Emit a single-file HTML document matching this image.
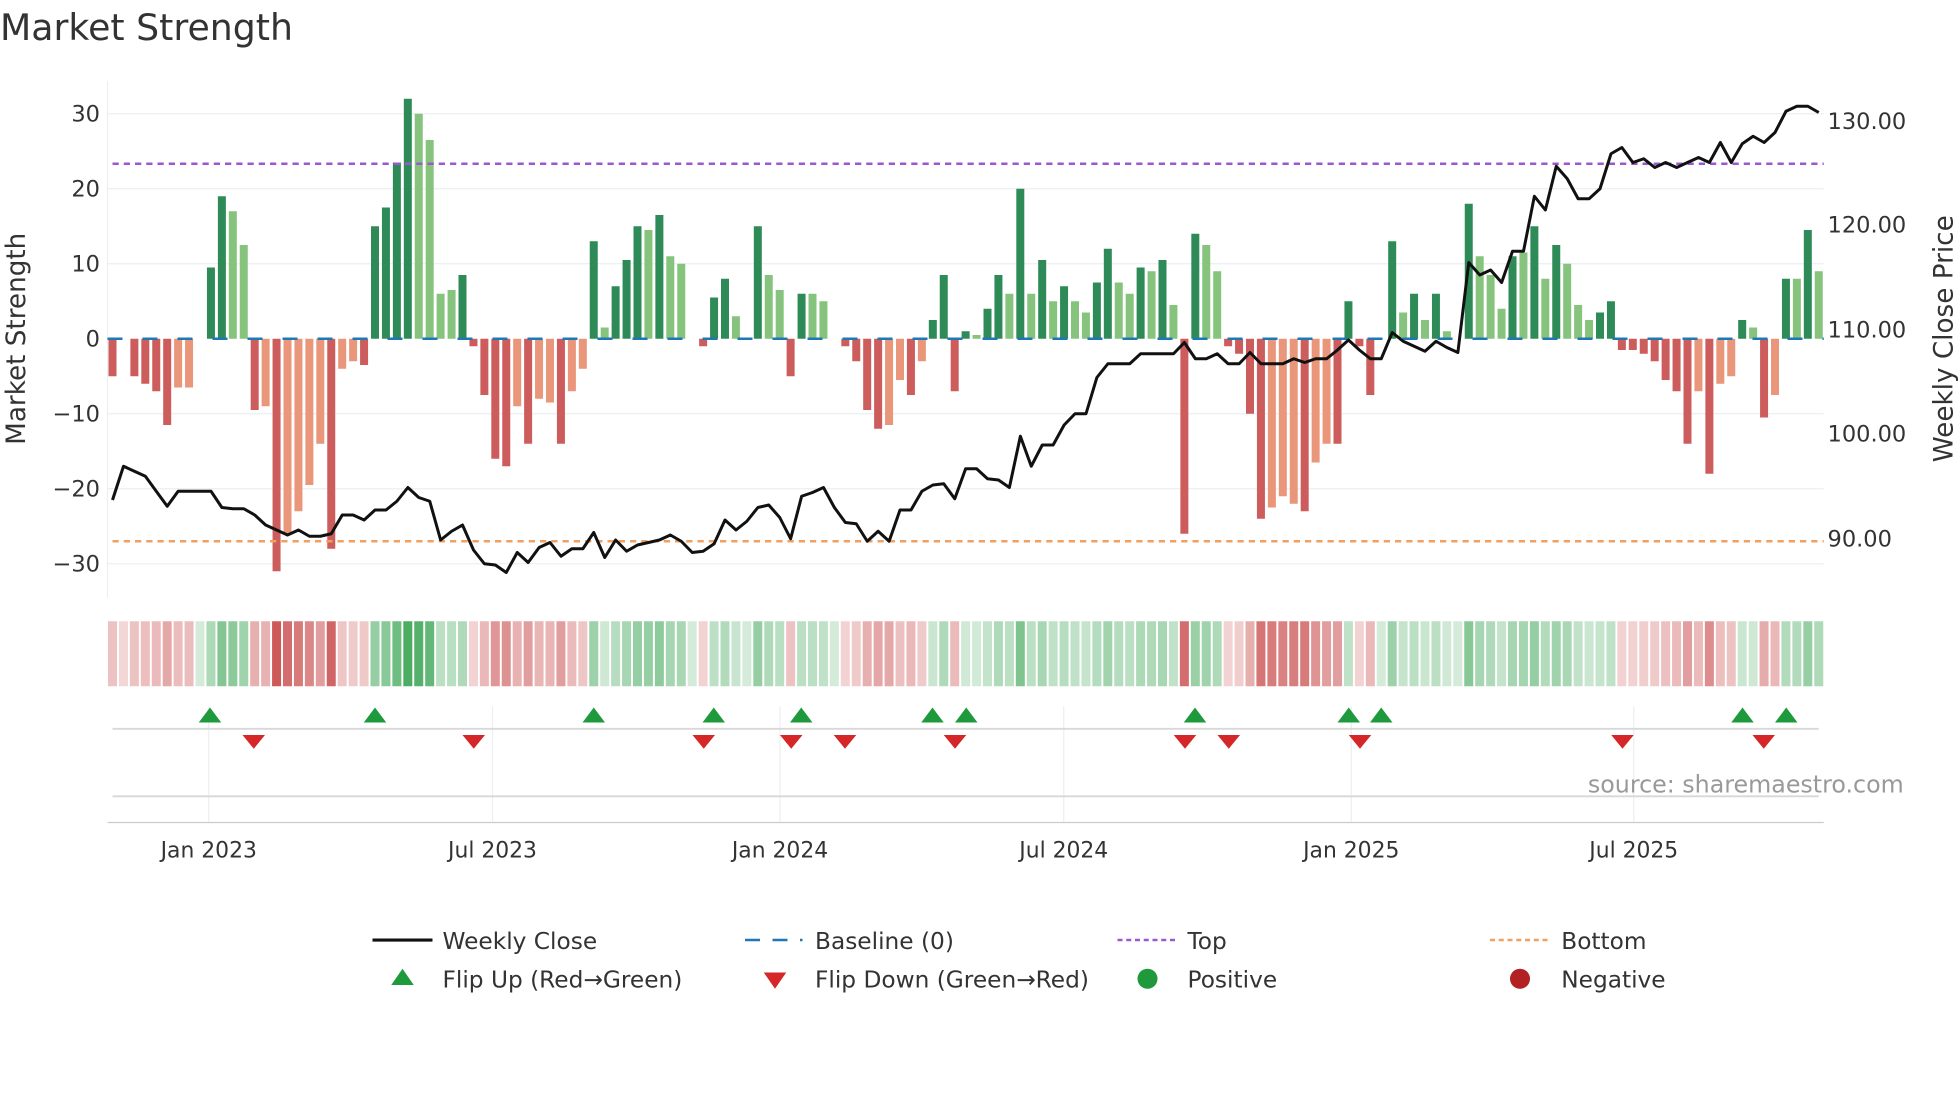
<!DOCTYPE html>
<html><head><meta charset="utf-8">
<style>
html,body{margin:0;padding:0;background:#fff;width:1960px;height:1102px;overflow:hidden}
svg{display:block;font-family:"DejaVu Sans","Liberation Sans",sans-serif}
</style></head><body>
<svg id="s" width="1960" height="1102" viewBox="0 0 1568 881.6" xmlns="http://www.w3.org/2000/svg">
<text x="0" y="32" font-size="29" fill="#333">Market Strength</text>
<g id="grid" stroke="#eceff3" stroke-width="1">
<line x1="86" x2="1459" y1="91" y2="91"/><line x1="86" x2="1459" y1="151" y2="151"/>
<line x1="86" x2="1459" y1="211" y2="211"/><line x1="86" x2="1459" y1="331" y2="331"/>
<line x1="86" x2="1459" y1="391" y2="391"/><line x1="86" x2="1459" y1="451" y2="451"/>
<line x1="86" x2="86" y1="65" y2="478"/>
<line x1="167" x2="167" y1="565" y2="658"/><line x1="394" x2="394" y1="565" y2="658"/>
<line x1="624" x2="624" y1="565" y2="658"/><line x1="851" x2="851" y1="565" y2="658"/>
<line x1="1081" x2="1081" y1="565" y2="658"/><line x1="1307" x2="1307" y1="565" y2="658"/>
</g>
<line x1="90" x2="1455" y1="583" y2="583" stroke="#d8d8d8" stroke-width="1.5"/>
<line x1="90" x2="1455" y1="637" y2="637" stroke="#d8d8d8" stroke-width="1.5"/>
<line x1="86" x2="1459" y1="658" y2="658" stroke="#ccc" stroke-width="1"/>
<g id="bars"></g>
<line x1="86" x2="1459" y1="271" y2="271" stroke="#1f77b4" stroke-width="2" stroke-dasharray="12,16"/>
<line x1="90" x2="1459" y1="131" y2="131" stroke="#9b59d0" stroke-width="2" stroke-dasharray="5,4"/>
<line x1="90" x2="1459" y1="433" y2="433" stroke="#f0a060" stroke-width="2" stroke-dasharray="5,4"/>
<polyline id="price" fill="none" stroke="#111" stroke-width="2.4" stroke-linejoin="round"/>
<g id="heat"></g>
<g id="tri"></g>
<g font-size="18" fill="#333" text-anchor="end">
<text x="80" y="97">30</text><text x="80" y="157">20</text><text x="80" y="217">10</text>
<text x="80" y="277">0</text><text x="80" y="337">−10</text><text x="80" y="397">−20</text><text x="80" y="457">−30</text>
</g>
<g font-size="18" fill="#333">
<text x="1462" y="103">130.00</text><text x="1462" y="186">120.00</text><text x="1462" y="270">110.00</text>
<text x="1462" y="353">100.00</text><text x="1462" y="437">90.00</text>
</g>
<g font-size="17.5" fill="#333" text-anchor="middle">
<text x="167" y="686">Jan 2023</text><text x="394" y="686">Jul 2023</text><text x="624" y="686">Jan 2024</text>
<text x="851" y="686">Jul 2024</text><text x="1081" y="686">Jan 2025</text><text x="1307" y="686">Jul 2025</text>
</g>
<text transform="translate(20,271) rotate(-90)" font-size="21" fill="#333" text-anchor="middle">Market Strength</text>
<text transform="translate(1562,271) rotate(-90)" font-size="21" fill="#333" text-anchor="middle">Weekly Close Price</text>
<text x="1523" y="634" font-size="19" fill="#999" text-anchor="end">source: sharemaestro.com</text>
<g font-size="18.6" fill="#333">
<line x1="298" x2="346" y1="752" y2="752" stroke="#111" stroke-width="2.5"/><text x="354" y="759">Weekly Close</text>
<line x1="596" x2="642" y1="752" y2="752" stroke="#1f77b4" stroke-width="2" stroke-dasharray="12,10"/><text x="652" y="759">Baseline (0)</text>
<line x1="894" x2="940" y1="752" y2="752" stroke="#9b59d0" stroke-width="2" stroke-dasharray="4,3"/><text x="950" y="759">Top</text>
<line x1="1192" x2="1238" y1="752" y2="752" stroke="#f0a060" stroke-width="2" stroke-dasharray="4,3"/><text x="1249" y="759">Bottom</text>
<polygon points="313,788 331,788 322,775" fill="#1e9a3c"/><text x="354" y="790">Flip Up (Red→Green)</text>
<polygon points="611,778 629,778 620,791" fill="#d62728"/><text x="652" y="790">Flip Down (Green→Red)</text>
<circle cx="918" cy="783" r="8" fill="#1e9a3c"/><text x="950" y="790">Positive</text>
<circle cx="1216" cy="783" r="8" fill="#b22222"/><text x="1249" y="790">Negative</text>
</g>
</svg>
<script>
var B="-5r 0r -5r -6r -7r -11.5r -6.5o -6.5o 0g 9.5g 19g 17l 12.5l -9.5r -9o -31r -26o -23o -19.5o -14o -28r -4o -3o -3.5r 15g 17.5g 23.5g 32g 30l 26.5l 6l 6.5l 8.5g -1r -7.5r -16r -17r -9o -14r -8o -8.5o -14r -7o -4o 13g 1.5l 7g 10.5g 15g 14.5l 16.5g 11l 10l 0g -1r 5.5g 8g 3l 0g 15g 8.5l 6.5l -5r 6g 6l 5l 0g -1r -3r -9.5r -12r -11.5o -5.5o -7.5r -3o 2.5g 8.5g -7r 1g 0.5l 4g 8.5g 6l 20g 6l 10.5g 5l 7g 5l 3.5l 7.5g 12g 7.5l 6l 9.5g 9l 10.5g 4.5l -26r 14g 12.5l 9l -1r -2r -10r -24r -22.5o -21o -22o -23r -16.5o -14o -14r 5g -1r -7.5r 0g 13g 3.5l 6g 2.5l 6g 1l 0g 18g 11l 8.5l 4l 11g 11.5l 15g 8l 12.5g 10l 4.5l 2.5l 3.5g 5g -1.5r -1.5r -2r -3r -5.5r -7r -14r -7o -18r -6o -5o 2.5g 1.5l -10.5r -7.5o 8g 8l 14.5g 9l".split(" ");
var C={r:"#cd5c5c",o:"#e9967a",g:"#2e8b57",l:"#86c47e"};
var P=[400,373,377,381,393,405,393,393,393,393,406,407,407,412,420,424,428,424,429,429,427,412,412,416,408,408,401,390,398,401,432,425,420,440,451,452,458,442,450,438,434,445,439,439,426,446,432,441,436,434,432,428,433,442,441,435,416,424,417,406,404,414,431,397,394,390,406,418,419,433,425,433,408,408,393,388,387,399,375,375,383,384,390,349,373,356,356,340,331,331,302,291,291,291,283,283,283,283,274,287,287,283,291,291,282,291,291,291,287,290,287,287,280,272,280,287,287,266,273,277,281,273,278,282,210,220,216,226,201,201,157,168,133,143,159,159,151,123,118,130,127,134,130,134,130,126,130,114,130,115,109,114,106,89,85,85,90];
var n=B.length,step=(1455-90)/(n-1),ns="http://www.w3.org/2000/svg";
function el(g,t,a){var e=document.createElementNS(ns,t);for(var k in a)e.setAttribute(k,a[k]);document.getElementById(g).appendChild(e);}
var pts=[];
for(var i=0;i<n;i++){
 var x=90+i*step,v=parseFloat(B[i]),c=B[i].slice(-1);
 if(v!=0){var y0=271,y1=271-v*6;el("bars","rect",{x:x-3.2,y:Math.min(y0,y1),width:6.4,height:Math.abs(y1-y0),fill:C[c]});}
 var a=Math.min(1,0.22+Math.abs(v)/32*0.7);
 var col=(v>0||(v==0&&c=="g"))?"rgba(60,165,85,"+a+")":"rgba(200,70,70,"+a+")";
 el("heat","rect",{x:x-3.6,y:497,width:7.2,height:52,fill:col});
 pts.push(x.toFixed(1)+","+(P[Math.min(i,P.length-1)]));
}
document.getElementById("price").setAttribute("points",pts.join(" "));
[168,300,475,571,641,746,773,956,1079,1105,1394,1429].forEach(function(x){el("tri","polygon",{points:(x-9)+",578 "+(x+9)+",578 "+x+",566",fill:"#1e9a3c"});});
[203,379,563,633,676,764,948,983,1088,1298,1411].forEach(function(x){el("tri","polygon",{points:(x-9)+",588 "+(x+9)+",588 "+x+",599",fill:"#d62728"});});
</script>
</body></html>
